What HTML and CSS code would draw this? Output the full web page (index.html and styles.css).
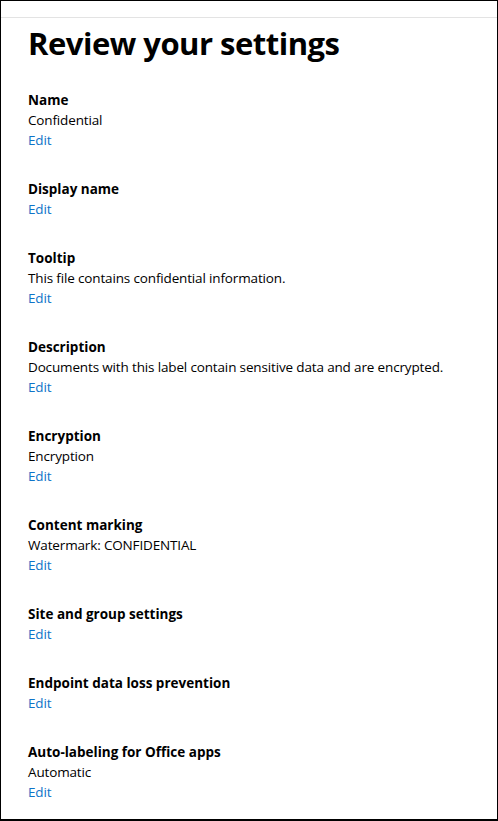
FILE: index.html
```html
<!DOCTYPE html>
<html lang="en">
<head>
<meta charset="utf-8">
<title>Review your settings</title>
<link rel="stylesheet" href="styles.css">
</head>
<body>
<div class="frame">
  <div class="topbar"></div>
  <main class="content">
    <h1 class="title">Review your settings</h1>
    <section class="item">
      <div class="label">Name</div>
      <div class="value">Confidential</div>
      <a class="edit" href="#">Edit</a>
    </section>
    <section class="item">
      <div class="label">Display name</div>
      <a class="edit" href="#">Edit</a>
    </section>
    <section class="item">
      <div class="label">Tooltip</div>
      <div class="value">This file contains confidential information.</div>
      <a class="edit" href="#">Edit</a>
    </section>
    <section class="item">
      <div class="label">Description</div>
      <div class="value">Documents with this label contain sensitive data and are encrypted.</div>
      <a class="edit" href="#">Edit</a>
    </section>
    <section class="item">
      <div class="label">Encryption</div>
      <div class="value">Encryption</div>
      <a class="edit" href="#">Edit</a>
    </section>
    <section class="item">
      <div class="label">Content marking</div>
      <div class="value">Watermark: CONFIDENTIAL</div>
      <a class="edit" href="#">Edit</a>
    </section>
    <section class="item">
      <div class="label">Site and group settings</div>
      <a class="edit" href="#">Edit</a>
    </section>
    <section class="item">
      <div class="label">Endpoint data loss prevention</div>
      <a class="edit" href="#">Edit</a>
    </section>
    <section class="item">
      <div class="label">Auto-labeling for Office apps</div>
      <div class="value">Automatic</div>
      <a class="edit" href="#">Edit</a>
    </section>
  </main>
</div>
</body>
</html>
```
FILE: styles.css
```css
* { box-sizing: border-box; }
html, body {
  margin: 0;
  padding: 0;
  background: #fff;
}
body {
  font-family: "Open Sans", "Noto Sans", sans-serif;
  color: #000;
}
.frame {
  width: 498px;
  height: 821px;
  border-top: 1px solid #000;
  border-left: 1px solid #000;
  border-right: 1px solid #000;
  border-bottom: 2px solid #000;
  overflow: hidden;
}
.topbar {
  height: 17px;
  border-bottom: 1px solid #e3e3e3;
}
.content {
  padding-left: 27px;
  display: flex;
  flex-direction: column;
}
.title {
  margin: 5px 0 27px;
  font-size: 31px;
  line-height: 40px;
  font-weight: 700;
  letter-spacing: -0.5px;
}
.item {
  display: flex;
  flex-direction: column;
  align-items: flex-start;
  margin-bottom: 29px;
  font-size: 13.5px;
  line-height: 20px;
}
.label {
  font-weight: 700;
}
.value {
  color: #000;
  letter-spacing: -0.15px;
}
.edit {
  color: #0f74c8;
  text-decoration: none;
  letter-spacing: -0.15px;
}
```
